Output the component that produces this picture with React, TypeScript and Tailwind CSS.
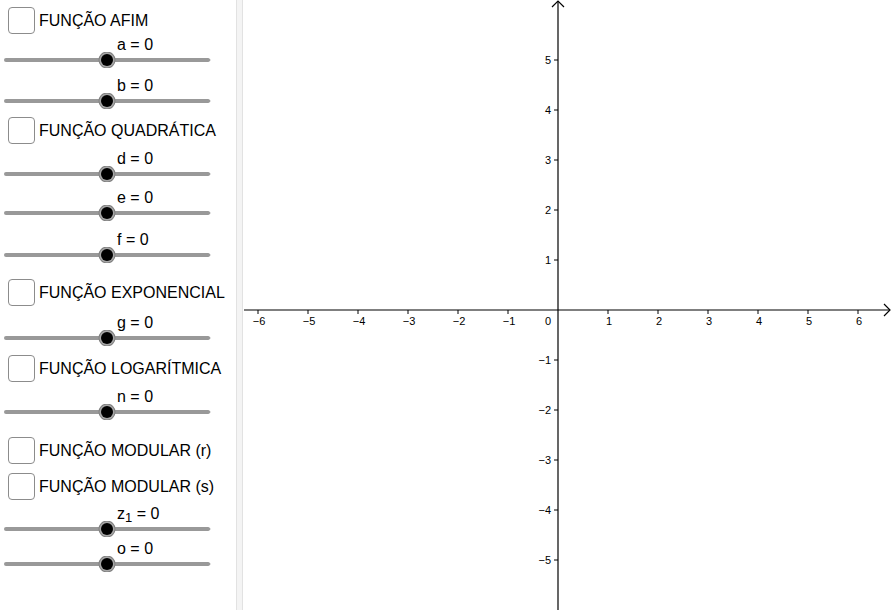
import type { ReactNode } from 'react'

const font = { fontFamily: '"Liberation Sans", Arial, sans-serif' }

function CheckRow({ label, className }: { label: string; className: string }) {
  return (
    <div className={`flex h-[27px] items-center gap-[4px] pl-[8px] ${className}`}>
      <div className="h-[27px] w-[27px] rounded-[4px] border border-[#8c8c8c] bg-white" />
      <span className="whitespace-nowrap text-[16px] leading-[18px] text-black">{label}</span>
    </div>
  )
}

function Slider({ label, className }: { label: ReactNode; className: string }) {
  return (
    <div className={`flex h-[34px] flex-col ${className}`}>
      <div className="h-[18px] whitespace-nowrap pl-[117px] text-[16px] leading-[22px] text-black">{label}</div>
      <svg width="236" height="16" viewBox="0 0 236 16" className="block">
        <line x1="6" y1="8" x2="208" y2="8" stroke="#999999" strokeWidth="4" strokeLinecap="round" />
        <polygon points="207,6 211,8 207,10" fill="#999999" />
        <circle cx="107" cy="8" r="8.5" fill="#7f7f7f" />
        <circle cx="107" cy="8" r="7.5" fill="#a6a6a6" />
        <circle cx="107" cy="8" r="6" fill="#000000" />
      </svg>
    </div>
  )
}

const xTicks = [-6, -5, -4, -3, -2, -1, 1, 2, 3, 4, 5, 6]
const yTicks = [5, 4, 3, 2, 1, -1, -2, -3, -4, -5]

function fmt(n: number) {
  return n < 0 ? `\u2212${Math.abs(n)}` : String(n)
}

function Graph() {
  const ox = 558
  const oy = 310
  const unit = 50
  return (
    <svg width="651" height="610" viewBox="243 0 651 610" className="block" style={font}>
      <rect x="243" y="0" width="651" height="610" fill="#ffffff" />
      <line x1="244" y1={oy} x2="890" y2={oy} stroke="#000" strokeWidth="1.2" />
      <polyline points="884,304 890,310 884,316" fill="none" stroke="#000" strokeWidth="1.2" />
      <line x1={ox} y1="610" x2={ox} y2="1" stroke="#000" strokeWidth="1.2" />
      <polyline points="552,7 558,1 564,7" fill="none" stroke="#000" strokeWidth="1.2" />
      {xTicks.map((t) => (
        <g key={`x${t}`}>
          <line x1={ox + t * unit} y1={oy} x2={ox + t * unit} y2={oy + 4} stroke="#000" strokeWidth="1" />
          <text x={ox + t * unit + 1} y={oy + 15} fontSize="11" textAnchor="middle" fill="#000">
            {fmt(t)}
          </text>
        </g>
      ))}
      {yTicks.map((t) => (
        <g key={`y${t}`}>
          <line x1={ox - 4} y1={oy - t * unit} x2={ox} y2={oy - t * unit} stroke="#000" strokeWidth="1" />
          <text x={ox - 7} y={oy - t * unit + 4} fontSize="11" textAnchor="end" fill="#000">
            {fmt(t)}
          </text>
        </g>
      ))}
      <text x={ox - 7} y={oy + 15} fontSize="11" textAnchor="end" fill="#000">
        0
      </text>
    </svg>
  )
}

export default function App() {
  return (
    <div className="flex h-[610px] w-[894px] overflow-hidden bg-white" style={font}>
      <div className="flex w-[236px] shrink-0 flex-col">
        <CheckRow label="FUNÇÃO AFIM" className="mt-[7px]" />
        <Slider label="a = 0" className="mt-0" />
        <Slider label="b = 0" className="mt-[7px]" />
        <CheckRow label="FUNÇÃO QUADRÁTICA" className="mt-[8px]" />
        <Slider label="d = 0" className="mt-[4px]" />
        <Slider label="e = 0" className="mt-[5px]" />
        <Slider label="f = 0" className="mt-[8px]" />
        <CheckRow label="FUNÇÃO EXPONENCIAL" className="mt-[16px]" />
        <Slider label="g = 0" className="mt-[6px]" />
        <CheckRow label="FUNÇÃO LOGARÍTMICA" className="mt-[9px]" />
        <Slider label="n = 0" className="mt-[4px]" />
        <CheckRow label="FUNÇÃO MODULAR (r)" className="mt-[17px]" />
        <CheckRow label="FUNÇÃO MODULAR (s)" className="mt-[9px]" />
        <Slider
          label={
            <span>
              z<sub className="relative top-[3px] text-[13px]">1</sub> = 0
            </span>
          }
          className="mt-[3px]"
        />
        <Slider label="o = 0" className="mt-[1px]" />
      </div>
      <div className="h-full w-[7px] shrink-0 border-l border-r border-[#e2e2e2] bg-[#f4f4f4]" />
      <Graph />
    </div>
  )
}
